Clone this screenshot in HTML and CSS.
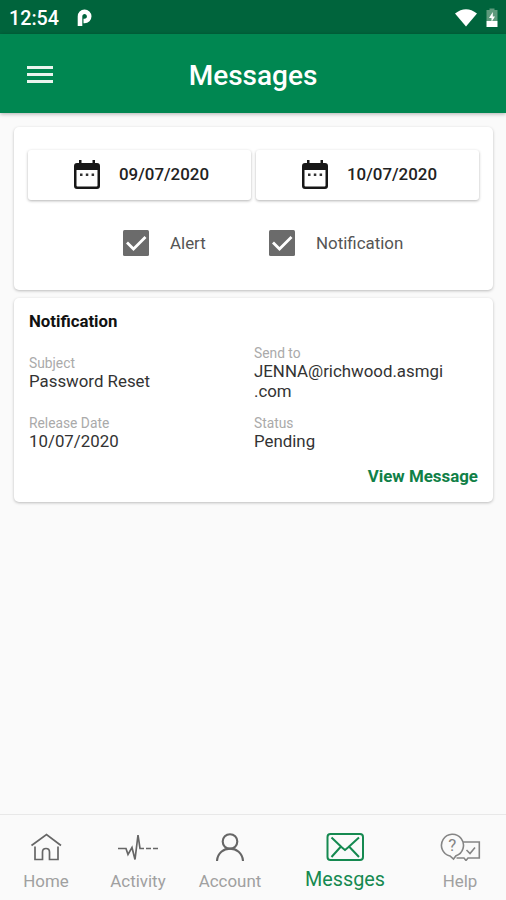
FILE: index.html
```html
<!DOCTYPE html>
<html lang="en">
<head>
    <meta charset="UTF-8">
    <title>Messages</title>
    <link rel="stylesheet" href="styles.css">
</head>
<body>

<div class="status-bar">
    <span class="clock">12:54</span>
    <svg class="p-icon" width="15" height="18" viewBox="0 0 15 18">
        <path d="M3 17V7.500A4.600 4.600 0 1 1 7.600 12H6.500" fill="none" stroke="#fff" stroke-width="4.600"/>
    </svg>
    <svg class="wifi-icon" width="22" height="18" viewBox="0 0 22 18">
        <path d="M0 4.500Q11-4 22 4.500L11 17.500Z" fill="#fff"/>
    </svg>
    <svg width="12" height="20" viewBox="0 0 12 20">
        <path d="M3.500 2V.500h5V2H11.500V13H.500V2Z" fill="#5f9a7d"/>
        <path d="M.500 13h11v6H.500z" fill="#fff"/>
        <path d="M6.800 4 3 10h2.500v4L9 8.500H6.800Z" fill="#fff"/>
    </svg>
</div>

<header class="app-bar">
    <button class="menu-btn" aria-label="Menu"><span></span><span></span><span></span></button>
    <h1>Messages</h1>
</header>

<main>
    <section class="card filters">
        <div class="dates">
            <button class="date-btn">
                <svg width="26" height="29" viewBox="0 0 26 29">
                    <path d="M5 0h2.500v3h11V0H21v3h2q3 0 3 3v20q0 3-3 3H3q-3 0-3-3V6q0-3 3-3h2ZM2.500 10v15.500q0 1 1 1h19q1 0 1-1V10Z" fill="#171717"/>
                    <path d="M6 13.500h2.500V16H6zM11.800 13.500h2.500V16h-2.500zM17.600 13.500h2.500V16h-2.500z" fill="#333"/>
                </svg>
                <span>09/07/2020</span>
            </button>
            <button class="date-btn">
                <svg width="26" height="29" viewBox="0 0 26 29">
                    <path d="M5 0h2.500v3h11V0H21v3h2q3 0 3 3v20q0 3-3 3H3q-3 0-3-3V6q0-3 3-3h2ZM2.500 10v15.500q0 1 1 1h19q1 0 1-1V10Z" fill="#171717"/>
                    <path d="M6 13.500h2.500V16H6zM11.800 13.500h2.500V16h-2.500zM17.600 13.500h2.500V16h-2.500z" fill="#333"/>
                </svg>
                <span>10/07/2020</span>
            </button>
        </div>
        <div class="checks">
            <div class="check">
                <svg width="26" height="26" viewBox="0 0 26 26">
                    <rect width="26" height="26" rx="1.500" fill="#6b6b6b"/>
                    <path d="M4 12.500 10.500 19 22.500 7" fill="none" stroke="#fff" stroke-width="2.800"/>
                </svg>
                <span>Alert</span>
            </div>
            <div class="check">
                <svg width="26" height="26" viewBox="0 0 26 26">
                    <rect width="26" height="26" rx="1.500" fill="#6b6b6b"/>
                    <path d="M4 12.500 10.500 19 22.500 7" fill="none" stroke="#fff" stroke-width="2.800"/>
                </svg>
                <span>Notification</span>
            </div>
        </div>
    </section>

    <section class="card message">
        <h2>Notification</h2>
        <div class="fields">
            <div class="field">
                <label>Subject</label>
                <p>Password Reset</p>
            </div>
            <div class="field">
                <label>Send to</label>
                <p>JENNA@richwood.asmgi<br>.com</p>
            </div>
            <div class="field">
                <label>Release Date</label>
                <p>10/07/2020</p>
            </div>
            <div class="field">
                <label>Status</label>
                <p>Pending</p>
            </div>
        </div>
        <a class="view-link" href="#">View Message</a>
    </section>
</main>

<nav class="bottom-nav">
    <a href="#">
        <svg width="32" height="28" viewBox="0 0 32 28">
            <path d="M1.500 12.500 16.500 1.500 31 12.500M5 13.500V26.500H12.500V19Q12.500 15.500 16 15.500T19.500 19V26.500H28V13.500"/>
        </svg>
        <span>Home</span>
    </a>
    <a href="#">
        <svg width="42" height="28" viewBox="0 0 42 28">
            <path d="M1 15.500H9L11 21.500 15 14.500 18 26.500 21 2 23 15.500H27M29 15.500H34M36 15.500H41"/>
        </svg>
        <span>Activity</span>
    </a>
    <a href="#">
        <svg class="person" width="28" height="28" viewBox="0 0 28 28">
            <circle cx="14" cy="8.500" r="7.300"/>
            <path d="M1 28C2 11.500 26 11.500 27 28"/>
        </svg>
        <span>Account</span>
    </a>
    <a class="active" href="#">
        <svg width="38" height="28" viewBox="0 0 38 28">
            <rect x="1.500" y="1" width="35.500" height="26" rx="3"/>
            <path d="M5.500 4.500 16 14.500 19 17 22 14.500 33 4.500M5.500 24 14.500 14M33 24 23.500 14"/>
        </svg>
        <span>Messges</span>
    </a>
    <a class="help" href="#">
        <svg width="42" height="28" viewBox="0 0 42 28">
            <path d="M11 23A11 11 0 1 1 17 22.700L14.500 26ZM24 9H40.300V25H29L27 27.500 25 25H17.500M27.500 17 31 20.500 36 14.500"/>
            <text x="13.200" y="18">?</text>
        </svg>
        <span>Help</span>
    </a>
</nav>

</body>
</html>
```
FILE: styles.css
```css
* {
    box-sizing: border-box;
    margin: 0;
    padding: 0;
}
body {
    font-family: Roboto, sans-serif;
    background-color: #fafafa;
    color: #333;
    display: flex;
    flex-direction: column;
    height: 100vh;
    overflow: hidden;
}
button {
    font-family: inherit;
    border: none;
    background: none;
}
a {
    text-decoration: none;
}
.status-bar {
    height: 34px;
    background-color: #00643c;
    color: #fff;
    display: flex;
    align-items: center;
    padding: 2px 8px 0 9px;
}
.clock {
    font-size: 19.7px;
    font-weight: 500;
    width: 68px;
}
.wifi-icon {
    margin-left: auto;
    margin-right: 9px;
}
.app-bar {
    height: 79px;
    background-color: #008751;
    box-shadow: 0 1px 4px rgba(0, 0, 0, 0.3);
    display: grid;
    grid-template-columns: 80px 1fr 80px;
    align-items: center;
    padding-top: 3px;
}
.menu-btn {
    display: flex;
    flex-direction: column;
    gap: 4px;
    width: 26px;
    margin-left: 27px;
    margin-bottom: 2px;
}
.menu-btn span {
    height: 3px;
    background-color: #eaf5ee;
}
h1 {
    color: #fff;
    font-size: 28px;
    font-weight: 500;
    text-align: center;
}
main {
    flex: 1;
    padding: 14px 13px 0 14px;
}
.card {
    background-color: #fff;
    border-radius: 5px;
    box-shadow: 0 1px 3px rgba(0, 0, 0, 0.25);
}
.filters {
    height: 163px;
    padding: 23px 14px 0 14px;
    margin-bottom: 8px;
}
.dates {
    display: grid;
    grid-template-columns: 1fr 1fr;
    gap: 5px;
}
.date-btn {
    height: 50px;
    border-radius: 3px;
    box-shadow: 0 1px 3px rgba(0, 0, 0, 0.3);
    display: flex;
    align-items: center;
    padding: 0 0 1px 46px;
    gap: 19px;
    font-size: 16.9px;
    font-weight: 500;
    color: #222;
}
.date-btn span {
    padding-bottom: 1px;
}
.checks {
    display: flex;
    padding: 30px 0 0 95px;
}
.check {
    display: flex;
    align-items: center;
    gap: 21px;
    width: 146px;
    font-size: 16.9px;
    color: #555;
}
.check span {
    padding-bottom: 1px;
}
.message {
    height: 204px;
    padding: 13px 15px 0;
    display: flex;
    flex-direction: column;
}
h2 {
    font-size: 16.8px;
    line-height: 20px;
    font-weight: 700;
    color: #111;
    margin-bottom: 14px;
}
.fields {
    display: grid;
    grid-template-columns: 225px 1fr;
    align-items: center;
    row-gap: 14px;
}
.field label {
    display: block;
    font-size: 13.8px;
    line-height: 16px;
    color: #aaa;
}
.field p {
    font-size: 16.85px;
    line-height: 20px;
}
.view-link {
    align-self: flex-end;
    margin-top: 15px;
    font-size: 16.9px;
    line-height: 20px;
    font-weight: 700;
    color: #108047;
}
.bottom-nav {
    height: 86px;
    border-top: 1px solid #e8e8e8;
    display: grid;
    grid-template-columns: 92px 92px 92px 138px 92px;
}
.bottom-nav a {
    display: flex;
    flex-direction: column;
    align-items: center;
    padding-top: 18px;
    font-size: 16.9px;
    line-height: 20px;
    color: #a0a0a0;
}
.bottom-nav svg {
    fill: none;
    stroke: #666;
    stroke-width: 1.7;
    margin-bottom: 10px;
}
.bottom-nav .person {
    stroke-width: 2.1;
}
.bottom-nav .active {
    font-size: 19.8px;
    color: #158950;
}
.bottom-nav .active svg {
    stroke: #158950;
    stroke-width: 2;
    margin-bottom: 9px;
}
.bottom-nav .help svg {
    stroke: #858585;
    stroke-width: 1.6;
}
.help text {
    font-size: 17px;
    text-anchor: middle;
    fill: #858585;
    stroke: none;
}
```
